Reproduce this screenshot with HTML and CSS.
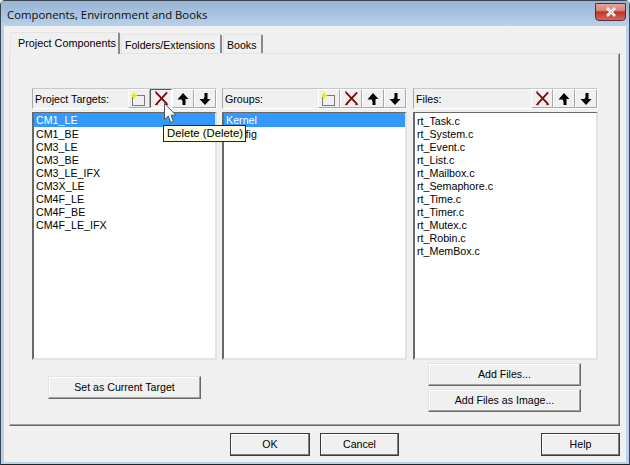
FILE: index.html
```html
<!DOCTYPE html>
<html lang="en">
<head>
<meta charset="utf-8">
<title>Components, Environment and Books</title>
<link rel="stylesheet" href="styles.css">
</head>
<body>
<svg class="defs" width="0" height="0" aria-hidden="true">
  <symbol id="i-new" viewBox="0 0 16 16">
    <path d="M1.500 6.500v8h12v-10h-9" fill="none" stroke="#000" stroke-dasharray="1 1"/>
    <path d="M3 1.500v6M0.500 4.500h5.500" stroke="#f2e400" stroke-width="1.400" fill="none"/>
    <path d="M1.500 3l3 3M4.500 3l-3 3" stroke="#f2e400" fill="none"/>
  </symbol>
  <symbol id="i-del" viewBox="0 0 16 16">
    <path d="M2 1.500l12 12.500M14 1.500L2.500 14" stroke="#7b0a0a" stroke-width="2" fill="none"/>
    <path d="M1 14.500h3M12 14.500h3M1 1h2" stroke="#7b0a0a" fill="none"/>
  </symbol>
  <symbol id="i-up" viewBox="0 0 14 14">
    <path d="M7 1L12.500 7H9.500V13H6.500V9.500L5.500 7.500H1.500Z" fill="#000"/>
  </symbol>
  <symbol id="i-down" viewBox="0 0 14 14">
    <path d="M6.500 1H9.500V7H12.500L7 13L1.500 7H5.500L6.500 5Z" fill="#000"/>
  </symbol>
</svg>
<div class="window">
  <header class="titlebar">
    <span class="title">Components, Environment and Books</span>
    <button class="close" type="button" aria-label="Close">
      <svg width="12" height="10" viewBox="0 0 12 10"><path d="M2 1l8 8M10 1l-8 8" stroke="#fff" stroke-width="2.600" fill="none"/><path d="M2 1l8 8M10 1l-8 8" stroke="#4a5560" stroke-width="0.500" fill="none" opacity=".5"/></svg>
    </button>
  </header>
  <div class="client">
    <nav class="tabs">
      <div class="tab active">Project Components</div>
      <div class="tab">Folders/Extensions</div>
      <div class="tab">Books</div>
    </nav>
    <section class="page">
      <div class="panels">
        <div class="panel">
          <div class="panel-head">
            <span class="panel-label">Project Targets:</span>
            <span class="tool"><svg class="ico"><use href="#i-new"/></svg></span>
            <span class="tool pressed"><svg class="ico del"><use href="#i-del"/></svg></span>
            <span class="tool"><svg class="ico small"><use href="#i-up"/></svg></span>
            <span class="tool"><svg class="ico small"><use href="#i-down"/></svg></span>
          </div>
          <ul class="list">
            <li class="sel">CM1_LE</li>
            <li>CM1_BE</li>
            <li>CM3_LE</li>
            <li>CM3_BE</li>
            <li>CM3_LE_IFX</li>
            <li>CM3X_LE</li>
            <li>CM4F_LE</li>
            <li>CM4F_BE</li>
            <li>CM4F_LE_IFX</li>
          </ul>
        </div>
        <div class="panel">
          <div class="panel-head">
            <span class="panel-label">Groups:</span>
            <span class="tool"><svg class="ico"><use href="#i-new"/></svg></span>
            <span class="tool"><svg class="ico del"><use href="#i-del"/></svg></span>
            <span class="tool"><svg class="ico small"><use href="#i-up"/></svg></span>
            <span class="tool"><svg class="ico small"><use href="#i-down"/></svg></span>
          </div>
          <ul class="list">
            <li class="sel">Kernel</li>
            <li>Config</li>
          </ul>
        </div>
        <div class="panel files">
          <div class="panel-head">
            <span class="panel-label">Files:</span>
            <span class="tool"><svg class="ico del"><use href="#i-del"/></svg></span>
            <span class="tool"><svg class="ico small"><use href="#i-up"/></svg></span>
            <span class="tool"><svg class="ico small"><use href="#i-down"/></svg></span>
          </div>
          <ul class="list">
            <li>rt_Task.c</li>
            <li>rt_System.c</li>
            <li>rt_Event.c</li>
            <li>rt_List.c</li>
            <li>rt_Mailbox.c</li>
            <li>rt_Semaphore.c</li>
            <li>rt_Time.c</li>
            <li>rt_Timer.c</li>
            <li>rt_Mutex.c</li>
            <li>rt_Robin.c</li>
            <li>rt_MemBox.c</li>
          </ul>
        </div>
      </div>
      <div class="page-actions">
        <button class="btn target-btn" type="button">Set as Current Target</button>
        <div class="file-btns">
          <button class="btn" type="button">Add Files...</button>
          <button class="btn" type="button">Add Files as Image...</button>
        </div>
      </div>
    </section>
    <footer class="footer">
      <button class="btn dlg" type="button">OK</button>
      <button class="btn dlg cancel" type="button">Cancel</button>
      <button class="btn dlg help" type="button">Help</button>
    </footer>
  </div>
  <div class="tooltip">Delete (Delete)</div>
  <svg class="cursor" width="13" height="21" viewBox="0 0 13 21"><path d="M0.500 0.500V16.500L4.300 13L6.800 19.500L9.500 18.300L7 12.200H12Z" fill="#fff" stroke="#555"/></svg>
</div>
</body>
</html>
```

FILE: styles.css
```css
* { box-sizing: border-box; }
html, body { margin: 0; padding: 0; }
body { width: 630px; height: 465px; overflow: hidden; background: #f0f0f0; font-family: "Liberation Sans", Arial, sans-serif; font-size: 10.700px; color: #000; }
.defs { position: absolute; }
.window { position: relative; width: 630px; height: 465px; background: #b9d1ea; border: 1px solid #3c4650; border-bottom-color: #1c2228; border-radius: 5px 5px 0 0; display: flex; flex-direction: column; }
.titlebar { height: 25px; flex: none; display: flex; align-items: center; justify-content: space-between; padding: 0 3px 0 6px; background: linear-gradient(#97b4d3, #b9d1ea); }
.title { font-family: "Open Sans", "Noto Sans", sans-serif; font-size: 11.350px; padding-top: 1px; color: #0c0c0c; white-space: nowrap; }
.close { width: 31px; height: 18px; margin: -3px 0 0; padding: 0; border: 1px solid #5f2a38; border-radius: 0 0 4px 4px; display: flex; align-items: center; justify-content: center; background: linear-gradient(#e5a49a 0, #d88578 40%, #b8372a 50%, #d2695a 100%); }
.client { flex: 1; margin: 0 3px 2px; background: #f0f0f0; padding: 5px 5px 0 5px; display: flex; flex-direction: column; }
.tabs { display: flex; align-items: flex-end; height: 22px; padding-left: 1px; position: relative; z-index: 1; }
.tab { height: 19px; padding: 4px 0 0 3px; background: #f0f0f0; border: 1px solid #e3e3e3; border-right: 2px solid #8a8a8a; border-bottom: 0; line-height: 13px; border-radius: 2px 2px 0 0; font-size: 10.600px; white-space: nowrap; }
.tab.active { height: 22px; width: 110px; padding: 4px 0 0 7px; margin-bottom: -1px; font-size: 10.800px; }
.tab:nth-child(2) { width: 101px; margin-left: 1px; }
.tab:nth-child(3) { width: 40px; margin-left: 1px; }
.page { height: 373px; width: 611px; border: 1px solid; border-color: #e3e3e3 #696969 #696969 #e3e3e3; box-shadow: inset -1px -1px 0 #a0a0a0; padding: 34px 0 0 22px; display: flex; flex-direction: column; }
.panels { display: flex; gap: 5px; }
.panel { width: 185px; flex: none; }
.panel.files { margin-left: 1px; }
.panel-head { height: 21px; display: flex; align-items: stretch; border: 1px solid; border-color: #c8c8c8 #fff #fff #a8a8a8; }
.panel-label { flex: 1; padding: 3px 0 0 2px; font-size: 10.700px; line-height: 15px; white-space: nowrap; }
.tool { width: 22px; flex: none; display: flex; align-items: center; justify-content: center; border: 1px solid; border-color: #fff #a8a8a8 #a8a8a8 #fff; }
.tool.pressed { border-color: #555 #fff #fff #555; }
.ico { width: 16px; height: 16px; display: block; }
.ico.del { width: 15px; height: 15px; }
.ico.small { width: 14px; height: 14px; }
.list { list-style: none; height: 248px; margin: 3px 0 0; padding: 1px 0 0; background: #fff; border: 2px solid; border-top-width: 1px; border-color: #696969 #e3e3e3 #e3e3e3 #696969; line-height: 14px; }
.list li { height: 13px; padding-left: 2px; white-space: nowrap; }
.list li.sel { height: 14px; margin-top: -1px; background: #3399ff; color: #fff; }
.btn { display: block; height: 23px; padding: 0 0 2px; font: inherit; font-size: 10.600px; color: #000; background: #f0f0f0; border: 1px solid; border-color: #e3e3e3 #696969 #696969 #e3e3e3; box-shadow: inset -1px -1px 0 #a0a0a0, inset 1px 1px 0 #fff; }
.page-actions { display: flex; align-items: flex-start; }
.target-btn { width: 153px; margin: 16px 0 0 16px; }
.file-btns { width: 153px; margin: 3px 0 0 227px; display: flex; flex-direction: column; gap: 3px; }
.file-btns .btn { width: 153px; }
.footer { display: flex; padding: 7px 0 0 221px; }
.dlg { width: 80px; border-color: #3a3a3a; box-shadow: inset -1px -1px 0 #808080, inset 1px 1px 0 #fff; }
.dlg.cancel { width: 79px; margin-left: 10px; }
.dlg.help { width: 79px; margin-left: 142px; }
.tooltip { position: absolute; left: 162px; top: 124px; height: 17px; width: 83px; padding: 0 0 0 3px; background: #ffffe1; border: 1px solid #222; line-height: 15px; font-size: 11.300px; white-space: nowrap; }
.cursor { position: absolute; left: 163px; top: 102px; }
```
